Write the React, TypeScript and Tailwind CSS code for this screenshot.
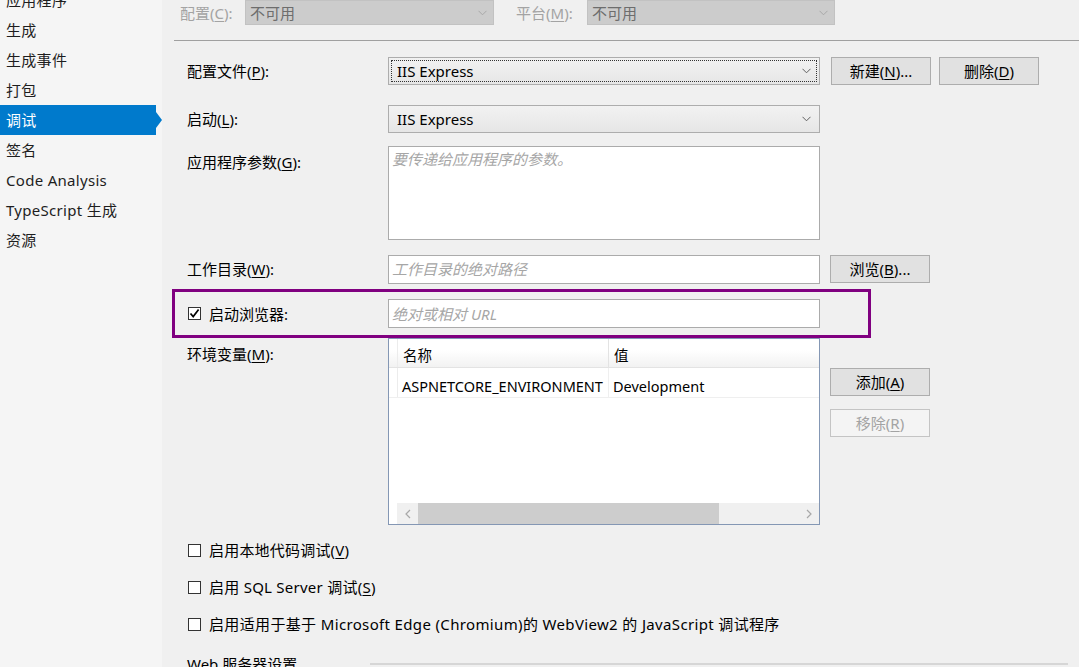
import type { ReactNode } from 'react'

const navItems = ['应用程序', '生成', '生成事件', '打包', '调试', '签名', 'Code Analysis', 'TypeScript 生成', '资源']

function Chevron({ color = '#606060' }: { color?: string }) {
  return (
    <svg width="9" height="6" viewBox="0 0 9 6" className="shrink-0">
      <polyline points="0.5,0.8 4.5,4.8 8.5,0.8" fill="none" stroke={color} strokeWidth="1" />
    </svg>
  )
}

function Mn({ children }: { children: ReactNode }) {
  return <u className="underline underline-offset-2 decoration-1">{children}</u>
}

function Button({ children, disabled = false }: { children: ReactNode; disabled?: boolean }) {
  return (
    <button
      className={
        disabled
          ? 'w-[100px] h-[28px] shrink-0 border border-[#c4c4c4] bg-[#f4f4f4] text-[#a3a3a3] leading-[20px]'
          : 'w-[100px] h-[28px] shrink-0 border border-[#adadad] bg-[#e1e1e1] text-black leading-[20px]'
      }
    >
      {children}
    </button>
  )
}

function Combo({ value, focused = false }: { value: string; focused?: boolean }) {
  return (
    <div className="w-[432px] h-[28px] shrink-0 border border-[#adadad] bg-gradient-to-b from-[#f2f2f2] to-[#e6e6e6] p-[2px]">
      <div
        className={`h-full flex items-center justify-between pl-[5px] pr-[5px] ${
          focused ? 'border border-dotted border-[#333]' : 'border border-transparent'
        }`}
      >
        <span className="leading-[20px]">{value}</span>
        <Chevron />
      </div>
    </div>
  )
}

function CheckBox({ checked = false }: { checked?: boolean }) {
  return (
    <span className="w-[13px] h-[13px] shrink-0 border border-[#333333] bg-white flex items-center justify-center">
      {checked && (
        <svg width="11" height="11" viewBox="0 0 11 11">
          <polyline points="1.5,5.5 4.2,8.6 9.6,1.6" fill="none" stroke="#000" strokeWidth="1.7" />
        </svg>
      )}
    </span>
  )
}

export default function App() {
  return (
    <div className="flex w-[1079px] h-[667px] overflow-hidden bg-[#f0f0f0] text-[15px] text-black font-['Noto_Sans','Noto_Sans_CJK_SC',sans-serif]">
      {/* Left navigation */}
      <aside className="w-[162px] shrink-0 bg-[#f5f5f5] flex flex-col -mt-[15px] tracking-[0.3px]">
        {navItems.map(item =>
          item === '调试' ? (
            <div key={item} className="flex items-center h-[30px] shrink-0">
              <div className="w-[156px] h-full bg-[#007acc] text-white pl-[6px] flex items-center leading-[20px]">{item}</div>
              <div className="w-0 h-0 border-y-[8px] border-y-transparent border-l-[6px] border-l-[#007acc]" />
            </div>
          ) : (
            <div key={item} className="h-[30px] shrink-0 pl-[6px] flex items-center leading-[20px] text-[#1e1e1e]">
              {item}
            </div>
          )
        )}
      </aside>

      {/* Main */}
      <main className="flex-1 min-w-0">
        {/* Configuration / platform */}
        <div className="h-[40px] flex items-start pl-[18px]">
          <div className="h-[25px] w-[65px] flex items-center text-[#a3a3a3] leading-[20px]">
            配置(<Mn>C</Mn>):
          </div>
          <div className="w-[249px] h-[25px] border border-[#c2c2c2] bg-[#cccccc] flex items-center justify-between pl-[4px] pr-[6px]">
            <span className="text-[#6d6d6d] leading-[20px]">不可用</span>
            <Chevron color="#a8a8a8" />
          </div>
          <div className="h-[25px] w-[71px] ml-[22px] flex items-center text-[#a3a3a3] leading-[20px]">
            平台(<Mn>M</Mn>):
          </div>
          <div className="w-[248px] h-[25px] border border-[#c2c2c2] bg-[#cccccc] flex items-center justify-between pl-[4px] pr-[6px]">
            <span className="text-[#6d6d6d] leading-[20px]">不可用</span>
            <Chevron color="#a8a8a8" />
          </div>
        </div>
        <div className="h-px ml-[12px] bg-[#a0a0a0]" />

        <div className="flex flex-col pl-[25px]">
          {/* Profile */}
          <div className="flex items-center mt-[16px] h-[28px]">
            <div className="w-[201px] leading-[20px]">配置文件(<Mn>P</Mn>):</div>
            <Combo value="IIS Express" focused />
            <div className="ml-[11px]">
              <Button>新建(<Mn>N</Mn>)...</Button>
            </div>
            <div className="ml-[8px]">
              <Button>删除(<Mn>D</Mn>)</Button>
            </div>
          </div>

          {/* Launch */}
          <div className="flex items-center mt-[20px] h-[28px]">
            <div className="w-[201px] leading-[20px]">启动(<Mn>L</Mn>):</div>
            <Combo value="IIS Express" />
          </div>

          {/* Arguments */}
          <div className="flex items-start mt-[13px]">
            <div className="w-[201px] leading-[20px] pt-[6px]">应用程序参数(<Mn>G</Mn>):</div>
            <textarea
              placeholder="要传递给应用程序的参数。"
              className="w-[432px] h-[94px] shrink-0 resize-none border border-[#ababab] bg-white px-[3px] py-[2px] leading-[20px] outline-none placeholder:italic placeholder:text-[#a6a6a6]"
            />
          </div>

          {/* Working directory */}
          <div className="flex items-center mt-[15px] h-[28px]">
            <div className="w-[201px] leading-[20px]">工作目录(<Mn>W</Mn>):</div>
            <input
              placeholder="工作目录的绝对路径"
              className="w-[432px] h-[29px] shrink-0 border border-[#ababab] bg-white px-[3px] leading-[20px] outline-none placeholder:italic placeholder:text-[#a6a6a6]"
            />
            <div className="ml-[10px]">
              <Button>浏览(<Mn>B</Mn>)...</Button>
            </div>
          </div>
        </div>

        {/* Launch browser (highlighted) */}
        <div className="mt-[6px] ml-[10px] w-[699px] h-[49px] border-[3px] border-[#800080] flex items-center pl-[13px]">
          <div className="w-[200px] flex items-center gap-[8px]">
            <CheckBox checked />
            <span className="leading-[20px]">启动浏览器:</span>
          </div>
          <input
            placeholder="绝对或相对 URL"
            className="w-[432px] h-[29px] shrink-0 border border-[#ababab] bg-white px-[3px] leading-[20px] outline-none placeholder:italic placeholder:text-[#a6a6a6]"
          />
        </div>

        <div className="flex flex-col pl-[25px]">
          {/* Environment variables */}
          <div className="flex items-start">
            <div className="w-[201px] leading-[20px] pt-[6px]">环境变量(<Mn>M</Mn>):</div>
            <div className="w-[432px] h-[187px] shrink-0 border border-[#8497b4] bg-white flex flex-col text-[14.5px]">
              <div className="flex h-[29px] shrink-0 bg-gradient-to-b from-white from-40% to-[#f2f2f2] border-b border-[#e3e3e3]">
                <div className="w-[9px] border-r border-[#ececec]" />
                <div className="w-[211px] pl-[5px] pt-[3px] flex items-center border-r border-[#e3e3e3] leading-[20px]">名称</div>
                <div className="flex-1 pl-[5px] pt-[3px] flex items-center leading-[20px]">值</div>
              </div>
              <div className="flex h-[30px] shrink-0 border-b border-[#efefef]">
                <div className="w-[9px] border-r border-[#ececec]" />
                <div className="w-[211px] pl-[4px] pt-[6px] flex items-center border-r border-[#efefef] leading-[20px] whitespace-nowrap overflow-hidden">ASPNETCORE_ENVIRONMENT</div>
                <div className="flex-1 pl-[4px] pt-[6px] flex items-center leading-[20px]">Development</div>
              </div>
              <div className="flex-1" />
              <div className="flex h-[21px] shrink-0">
                <div className="w-[8px]" />
                <div className="flex-1 flex bg-[#f0f0f0]">
                  <div className="w-[21px] flex items-center justify-center">
                    <svg width="6" height="10" viewBox="0 0 6 10">
                      <polyline points="5,1 1,5 5,9" fill="none" stroke="#a8a8a8" strokeWidth="1.2" />
                    </svg>
                  </div>
                  <div className="w-[301px] bg-[#cdcdcd]" />
                  <div className="flex-1" />
                  <div className="w-[21px] flex items-center justify-center">
                    <svg width="6" height="10" viewBox="0 0 6 10">
                      <polyline points="1,1 5,5 1,9" fill="none" stroke="#a8a8a8" strokeWidth="1.2" />
                    </svg>
                  </div>
                </div>
              </div>
            </div>
            <div className="ml-[10px] flex flex-col">
              <div className="mt-[30px]">
                <Button>添加(<Mn>A</Mn>)</Button>
              </div>
              <div className="mt-[13px]">
                <Button disabled>移除(<Mn>R</Mn>)</Button>
              </div>
            </div>
          </div>

          {/* Debugger options */}
          <label className="flex items-center gap-[8px] h-[20px] mt-[15px] pl-[1px] tracking-[0.2px]">
            <CheckBox />
            <span className="leading-[20px]">启用本地代码调试(<Mn>V</Mn>)</span>
          </label>
          <label className="flex items-center gap-[8px] h-[20px] mt-[17px] pl-[1px] tracking-[0.25px]">
            <CheckBox />
            <span className="leading-[20px]">启用 SQL Server 调试(<Mn>S</Mn>)</span>
          </label>
          <label className="flex items-center gap-[8px] h-[20px] mt-[17px] pl-[1px] tracking-[0.35px]">
            <CheckBox />
            <span className="leading-[20px] whitespace-nowrap">启用适用于基于 Microsoft Edge (Chromium)的 WebView2 的 JavaScript 调试程序</span>
          </label>

          {/* Web server settings */}
          <div className="flex items-center h-[20px] mt-[20px]">
            <span className="w-[183px] leading-[20px]">Web 服务器设置</span>
            <div className="w-[698px] h-[2px] bg-[#d6d6d6]" />
          </div>
        </div>
      </main>
    </div>
  )
}
